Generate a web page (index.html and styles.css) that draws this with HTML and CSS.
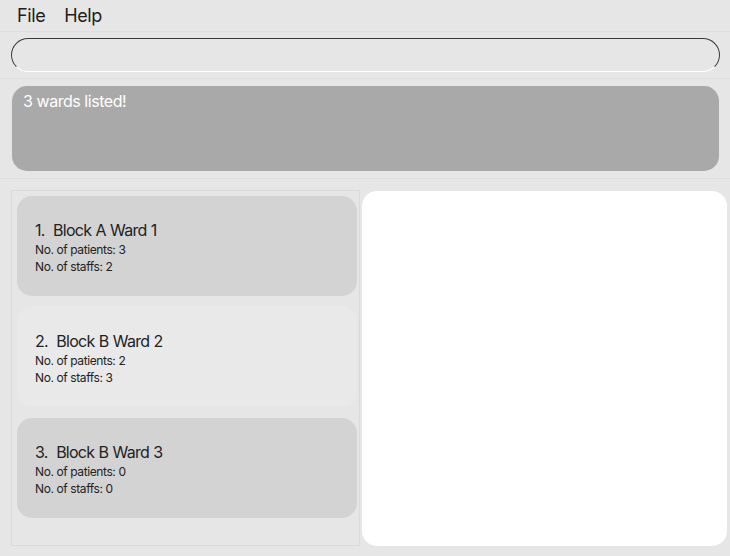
FILE: index.html
```html
<!DOCTYPE html>
<html>
<head>
<meta charset="utf-8">
<link rel="stylesheet" href="styles.css">
</head>
<body>
<div class="app">
  <div class="menubar">
    <span class="menu">File</span>
    <span class="menu">Help</span>
  </div>
  <div class="cmd-area">
    <div class="cmd-box"></div>
  </div>
  <div class="result-area">
    <div class="result-box">3 wards listed!</div>
  </div>
  <div class="main">
    <div class="list">
      <div class="card odd">
        <div class="title">1.&nbsp; Block A Ward 1</div>
        <div class="line">No. of patients: 3</div>
        <div class="line">No. of staffs: 2</div>
      </div>
      <div class="card even">
        <div class="title">2.&nbsp; Block B Ward 2</div>
        <div class="line">No. of patients: 2</div>
        <div class="line">No. of staffs: 3</div>
      </div>
      <div class="card odd">
        <div class="title">3.&nbsp; Block B Ward 3</div>
        <div class="line">No. of patients: 0</div>
        <div class="line">No. of staffs: 0</div>
      </div>
    </div>
    <div class="detail"></div>
  </div>
</div>
</body>
</html>
```
FILE: styles.css
```css
html, body {
  margin: 0;
  padding: 0;
  background: #e6e6e6;
  font-family: "Inter", "Liberation Sans", sans-serif;
}
.app {
  width: 730px;
  height: 556px;
  display: flex;
  flex-direction: column;
}
.menubar {
  height: 32px;
  border-bottom: 1px solid #dedede;
  display: flex;
  align-items: center;
  padding-left: 17px;
  gap: 19px;
  font-size: 18px;
  letter-spacing: -0.4px;
  color: #1e1e1e;
  box-sizing: border-box;
}
.cmd-area {
  padding: 6px 10px 6px 11px;
  border-bottom: 1px solid #dedede;
}
.cmd-box {
  height: 34px;
  border-radius: 17px;
  border: 1px solid #3a3a3a;
  border-bottom-color: #ffffff;
  box-sizing: border-box;
  background: #e6e6e6;
}
.result-area {
  padding: 7px 11px 7px 12px;
  border-bottom: 1px solid #dedede;
}
.result-box {
  height: 85px;
  background: #a9a9a9;
  border-radius: 15px;
  color: #ffffff;
  font-size: 16px;
  letter-spacing: -0.45px;
  padding: 5px 11px;
  box-sizing: border-box;
}
.main {
  flex: 1;
  display: flex;
  padding: 11px 3px 10px 11px;
  gap: 2px;
}
.list {
  width: 349px;
  border: 1px solid #dadada;
  padding: 5px 0 0 5px;
  box-sizing: border-box;
  display: flex;
  flex-direction: column;
  gap: 11px;
}
.card {
  width: 340px;
  height: 100px;
  border-radius: 15px;
  box-sizing: border-box;
  padding: 24px 18px 0;
  color: #222222;
}
.card.odd { background: #d3d3d3; }
.card.even { background: #e9e9e9; }
.title {
  font-size: 16px;
  line-height: 21px;
  letter-spacing: -0.75px;
  word-spacing: 0.5px;
}
.line {
  font-size: 12px;
  line-height: 17px;
  letter-spacing: -0.4px;
}
.detail {
  flex: 1;
  background: #ffffff;
  border-radius: 15px;
  margin-top: 1px;
}
```
